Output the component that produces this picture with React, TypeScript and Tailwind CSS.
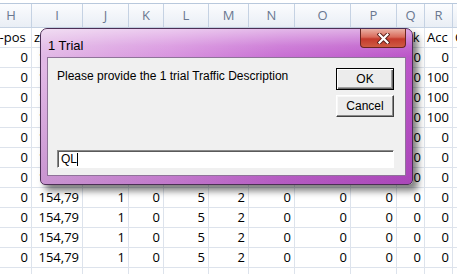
import React from "react";

const cols = ["H", "I", "J", "K", "L", "M", "N", "O", "P", "Q", "R", "S"];

const labels = ["y-pos", "z-pos", "Dly", "Spd", "Lane", "Typ", "Gap", "Sig", "Dir", "Brk", "Acc", "Cls"];

const acc = ["0", "100", "100", "100", "0", "0", "0", "0", "0", "0", "0"];

const rows = acc.map((a) => ["0", "154,79", "1", "0", "5", "2", "0", "0", "0", "0", a, "0"]);

const gridCols =
  "grid grid-cols-[41px_51px_46px_35px_45px_40px_46px_56px_46px_28px_28px_40px]";

function Sheet() {
  return (
    <div className="w-[457px] h-[274px] overflow-hidden bg-white">
      <div className="h-[3px] bg-white" />
      <div className="ml-[-9px] w-[502px] border-t border-[#b8c8dc] font-['Open_Sans',sans-serif] text-[13px]">
        {/* column letters */}
        <div className={`${gridCols} h-[24px]`}>
          {cols.map((c) => (
            <div
              key={c}
              className="flex items-end justify-center pb-[2px] border-r border-b border-[#c5d2e3] bg-[linear-gradient(#fbfcfe,#e9eef5)] text-[#6a7890]"
            >
              {c}
            </div>
          ))}
        </div>

        {/* label row */}
        <div className={`${gridCols} h-[20px]`}>
          {labels.map((l) => (
            <div
              key={l}
              className="pl-[2px] leading-[19px] whitespace-nowrap border-r border-b border-[#dde3ec] text-black"
            >
              {l}
            </div>
          ))}
        </div>

        {rows.map((r, i) => (
          <div key={i} className={`${gridCols} h-[20px]`}>
            {r.map((v, j) => (
              <div
                key={j}
                className="pr-[3px] text-right leading-[19px] whitespace-nowrap border-r border-b border-[#dde3ec] text-black"
              >
                {v}
              </div>
            ))}
          </div>
        ))}

        <div className={`${gridCols} h-[20px]`}>
          {cols.map((c) => (
            <div key={c} className="border-r border-b border-[#dde3ec]" />
          ))}
        </div>
      </div>
    </div>
  );
}

function InputDialog() {
  return (
    <div className="absolute left-[40px] top-[28px] w-[373px] h-[157px] flex flex-col rounded-t-[7px] rounded-b-[5px] border border-[#4b2f55] shadow-[5px_6px_7px_rgba(0,0,0,0.5)] bg-[linear-gradient(180deg,rgba(255,255,255,0)_25%,rgba(110,20,130,0.22)_100%),linear-gradient(90deg,#e2b9e6_0%,#d894df_35%,#c86fd3_65%,#bb55c8_100%)] font-['Liberation_Sans',Arial,sans-serif] text-[12px] text-black">
      {/* title bar */}
      <div className="flex h-[28px] shrink-0 rounded-t-[6px] bg-[linear-gradient(180deg,rgba(255,255,255,0.5),rgba(255,255,255,0.12)_60%,rgba(255,255,255,0))]">
        <span className="pl-[7px] pt-[7px] text-[13px]">1 Trial</span>
        <button className="ml-auto mr-[6px] w-[46px] h-[19px] flex items-center justify-center rounded-b-[4px] border border-t-0 border-[#6b2620] bg-[linear-gradient(180deg,#eab1a5_0%,#d96a5a_45%,#c43a2c_55%,#cf5b43_100%)]">
          <svg width="13" height="11" viewBox="0 0 13 11">
            <path d="M2.5 1.5 L10.5 9.5 M10.5 1.5 L2.5 9.5" stroke="#5a1d18" strokeWidth="4" strokeLinecap="square" />
            <path d="M2.5 1.5 L10.5 9.5 M10.5 1.5 L2.5 9.5" stroke="#ffffff" strokeWidth="2.2" strokeLinecap="square" />
          </svg>
        </button>
      </div>

      {/* client area */}
      <div className="mx-[6px] mb-[8px] flex-1 flex flex-col border border-[#8f7399] bg-[#f0f0f0] pl-[9px] pr-[11px] pt-[10px]">
        <div className="flex">
          <p className="flex-1 leading-[15px] pt-[1px]">
            Please provide the 1 trial Traffic Description
          </p>
          <div className="w-[58px] flex flex-col gap-[5px]">
            <button className="h-[22px] border border-black bg-[#ececec] shadow-[inset_1px_1px_#ffffff,inset_-1px_-1px_#696969,inset_-2px_-2px_#a0a0a0] text-[12px]">
              OK
            </button>
            <button className="h-[22px] border border-t-[#ffffff] border-l-[#ffffff] border-b-[#404040] border-r-[#404040] bg-[#ececec] shadow-[inset_-1px_-1px_#8a8a8a,inset_1px_1px_#f8f8f8] text-[12px]">
              Cancel
            </button>
          </div>
        </div>
        <div className="mt-auto mb-[7px] h-[18px] flex items-center border border-t-[#8a8a8a] border-l-[#8a8a8a] border-b-[#ffffff] border-r-[#ffffff] bg-white shadow-[inset_1px_1px_#5a5a5a] pl-[3px]">
          <span className="leading-[14px]">QL</span>
          <span className="w-[1px] h-[13px] bg-black" />
        </div>
      </div>
    </div>
  );
}

export default function App() {
  return (
    <div className="relative w-[457px] h-[274px] overflow-hidden">
      <Sheet />
      <InputDialog />
    </div>
  );
}
